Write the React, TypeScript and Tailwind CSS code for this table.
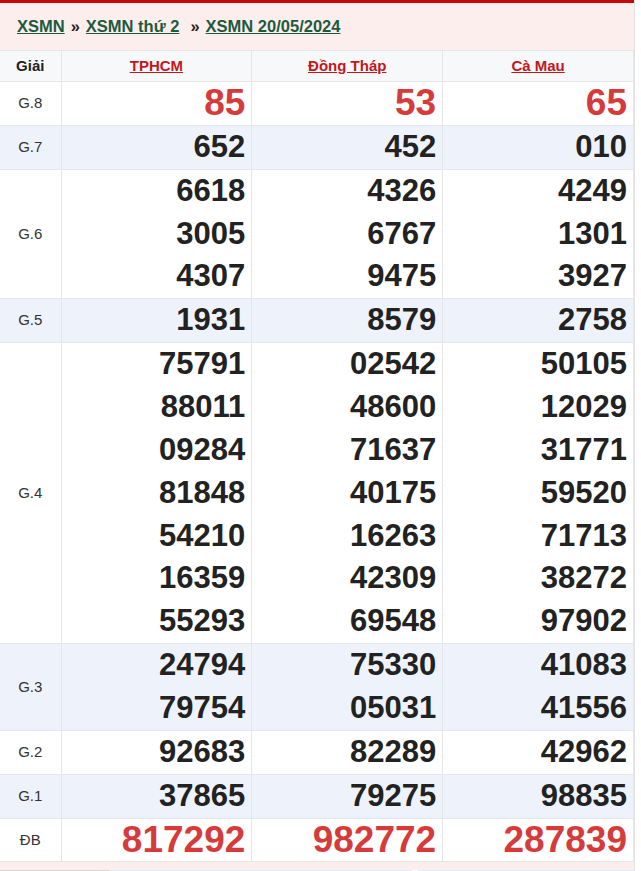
import React from "react";

type Row = { label: string; nums: string[][]; alt?: boolean; red?: boolean };

const rows: Row[] = [
  { label: "G.8", nums: [["85"], ["53"], ["65"]], red: true },
  { label: "G.7", nums: [["652"], ["452"], ["010"]], alt: true },
  {
    label: "G.6",
    nums: [
      ["6618", "3005", "4307"],
      ["4326", "6767", "9475"],
      ["4249", "1301", "3927"],
    ],
  },
  { label: "G.5", nums: [["1931"], ["8579"], ["2758"]], alt: true },
  {
    label: "G.4",
    nums: [
      ["75791", "88011", "09284", "81848", "54210", "16359", "55293"],
      ["02542", "48600", "71637", "40175", "16263", "42309", "69548"],
      ["50105", "12029", "31771", "59520", "71713", "38272", "97902"],
    ],
  },
  {
    label: "G.3",
    nums: [
      ["24794", "79754"],
      ["75330", "05031"],
      ["41083", "41556"],
    ],
    alt: true,
  },
  { label: "G.2", nums: [["92683"], ["82289"], ["42962"]] },
  { label: "G.1", nums: [["37865"], ["79275"], ["98835"]], alt: true },
  { label: "ĐB", nums: [["817292"], ["982772"], ["287839"]], red: true },
];

const provinces = ["TPHCM", "Đồng Tháp", "Cà Mau"];

export default function App() {
  return (
    <div className="w-[641px] h-[871px] overflow-hidden bg-white" style={{ fontFamily: '"Liberation Sans", Arial, sans-serif' }}>
      <div className="w-[635px] border-r border-[#e3e3e3]">
        <div className="h-[3px] bg-[#c8070b]" />
        <div className="h-[47px] bg-[#fdeeee] flex items-center pl-[17px] text-[16.5px] font-bold text-[#222]">
          <a className="underline text-[#1e5a3c]">XSMN</a>
          <span className="mx-[6px]">»</span>
          <a className="underline text-[#1e5a3c]">XSMN thứ 2</a>
          <span className="ml-[11px] mr-[6px]">»</span>
          <a className="underline text-[#1e5a3c]">XSMN 20/05/2024</a>
        </div>
        <table className="w-full border-collapse table-fixed">
          <colgroup>
            <col className="w-[61px]" />
            <col />
            <col />
            <col />
          </colgroup>
          <thead>
            <tr className="h-[31px] bg-[#f7f8f9]">
              <th className="border border-[#e4e6ea] border-l-0 text-[15px] font-bold text-[#222] p-0">Giải</th>
              {provinces.map((p) => (
                <th key={p} className="border border-[#e4e6ea] text-[15px] font-bold p-0">
                  <a className="underline text-[#c4161c]">{p}</a>
                </th>
              ))}
            </tr>
          </thead>
          <tbody>
            {rows.map((r) => (
              <tr key={r.label} className={r.alt ? "bg-[#eef2fa]" : "bg-white"}>
                <td className="border border-[#e4e6ea] border-l-0 text-center text-[15px] text-[#333] p-0">{r.label}</td>
                {r.nums.map((col, i) => (
                  <td key={i} className="border border-[#e4e6ea] text-right pr-[6px] p-0 align-middle">
                    {col.map((n) => (
                      <div
                        key={n}
                        className={
                          r.red
                            ? "h-[42.86px] leading-[42.86px] text-[37px] font-bold text-[#d63b3b]"
                            : "h-[42.86px] leading-[42.86px] text-[31px] font-bold text-[#222]"
                        }
                      >
                        {n}
                      </div>
                    ))}
                  </td>
                ))}
              </tr>
            ))}
          </tbody>
        </table>
        <div className="h-[8px] bg-[#fdeeee]" />
        <div className="flex h-[10px]">
          <div className="w-[109px] border border-[#d6d6d6] bg-white" />
          <div className="flex-1 bg-[#dcecf4]" />
          <div className="w-[6px] bg-white" />
          <div className="w-[216px] bg-[#dcecf4]" />
        </div>
      </div>
    </div>
  );
}
